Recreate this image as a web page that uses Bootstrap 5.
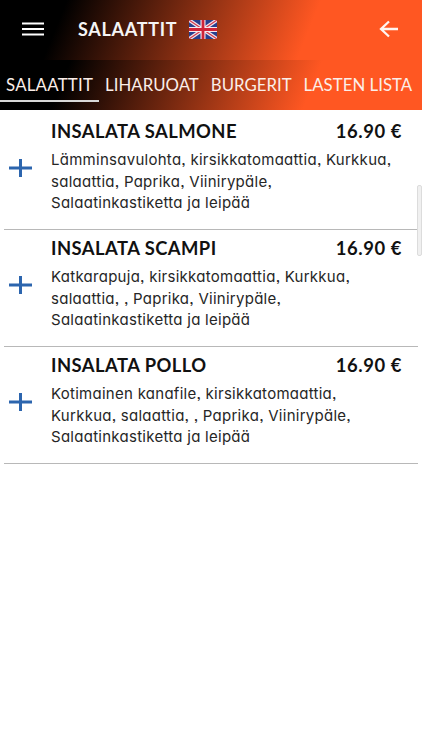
<!DOCTYPE html>
<html lang="fi">
<head>
<meta charset="utf-8">
<meta name="viewport" content="width=device-width, initial-scale=1">
<title>Salaattit</title>
<link rel="stylesheet" href="https://cdn.jsdelivr.net/npm/bootstrap@5.3.0/dist/css/bootstrap.min.css">
<style>
body{font-family:Inter,"Open Sans",sans-serif;font-feature-settings:"cv11","ss03";height:750px;overflow:hidden;color:#262626}
.topbar{height:60px;padding-bottom:2px;background:linear-gradient(112deg,#000 15%,#ff5722 72%)}
.tabs{height:50px;background:linear-gradient(112deg,#000 16%,#ff5722 73%);font-family:Lato,sans-serif;font-size:16.8px}
.tabs .nav-link{color:#fbeee9;padding:10px 6px 0;height:42px;line-height:30px;letter-spacing:.02px;border-bottom:2px solid transparent;white-space:nowrap}
.tabs .nav-link.active{border-color:#d8d8d8;letter-spacing:.25px}
.menu-btn{margin-left:22px;margin-right:34px}
.title{font:700 18px/28px Lato,sans-serif;letter-spacing:.7px;color:#f5f5f5;margin-right:12px}
.menu-list{padding-top:3px}
.dish{height:117px;border-bottom:1px solid #b8b8b8;margin:0 4px}
.plus{width:47px;padding-left:5px;padding-bottom:6px}
.dish-head{font:700 18.4px/26px Lato,sans-serif;letter-spacing:.45px;color:#111;padding-top:5px;padding-right:16px}
.price{letter-spacing:.6px}
.desc{font-size:15px;letter-spacing:.27px;line-height:21.6px;margin-top:5px;white-space:nowrap}
.thumb{position:absolute;right:0;top:185px;width:5px;height:71px;background:#f0f0f0;border:1px solid #dcdcdc;border-radius:2px}
</style>
<script src="https://cdn.jsdelivr.net/npm/bootstrap@5.3.0/dist/js/bootstrap.bundle.min.js"></script>
</head>
<body class="bg-white position-relative">
<header class="topbar d-flex align-items-center">
<svg class="menu-btn" width="22" height="14"><path d="M0 1.5H22M0 7H22M0 12.5H22" stroke="#fff" stroke-width="2"/></svg>
<span class="title">SALAATTIT</span>
<svg width="28" height="19" viewBox="0 0 28 19"><path fill="#283f8e" d="M0 0h28v19H0z"/><path d="M0 0L28 19M28 0L0 19" stroke="#f0e4ec" stroke-width="3.6"/><path d="M0 0L28 19M28 0L0 19" stroke="#d33a4d" stroke-width="1.2"/><path d="M14 0V19M0 9.5H28" stroke="#f6e8ee" stroke-width="5"/><path d="M14 0V19M0 9.5H28" stroke="#cf2338" stroke-width="2.8"/></svg>
<svg class="ms-auto me-4" width="19" height="18" viewBox="0 0 19 18"><path d="M19 9H2M10 1.5L2 9L10 16.5" fill="none" stroke="#fff5f0" stroke-width="2.3"/></svg>
</header>
<nav class="tabs nav flex-nowrap">
<a class="nav-link active" href="#">SALAATTIT</a><a class="nav-link" href="#">LIHARUOAT</a><a class="nav-link" href="#">BURGERIT</a><a class="nav-link" href="#">LASTEN LISTA</a>
</nav>
<main class="menu-list">
<article class="dish d-flex"><div class="plus d-flex align-items-center"><svg width="23" height="18"><path d="M0 9H23M11.5 0V18" stroke="#2c65ae" stroke-width="3"/></svg></div><div class="flex-grow-1"><div class="dish-head d-flex justify-content-between"><span>INSALATA SALMONE</span><span class="price">16.90 €</span></div><div class="desc">Lämminsavulohta, kirsikkatomaattia, Kurkkua,<br>salaattia, Paprika, Viinirypäle,<br>Salaatinkastiketta ja leipää</div></div></article>
<article class="dish d-flex"><div class="plus d-flex align-items-center"><svg width="23" height="18"><path d="M0 9H23M11.5 0V18" stroke="#2c65ae" stroke-width="3"/></svg></div><div class="flex-grow-1"><div class="dish-head d-flex justify-content-between"><span>INSALATA SCAMPI</span><span class="price">16.90 €</span></div><div class="desc">Katkarapuja, kirsikkatomaattia, Kurkkua,<br>salaattia, , Paprika, Viinirypäle,<br>Salaatinkastiketta ja leipää</div></div></article>
<article class="dish d-flex"><div class="plus d-flex align-items-center"><svg width="23" height="18"><path d="M0 9H23M11.5 0V18" stroke="#2c65ae" stroke-width="3"/></svg></div><div class="flex-grow-1"><div class="dish-head d-flex justify-content-between"><span>INSALATA POLLO</span><span class="price">16.90 €</span></div><div class="desc">Kotimainen kanafile, kirsikkatomaattia,<br>Kurkkua, salaattia, , Paprika, Viinirypäle,<br>Salaatinkastiketta ja leipää</div></div></article>
</main>
<div class="thumb"></div>
</body>
</html>
